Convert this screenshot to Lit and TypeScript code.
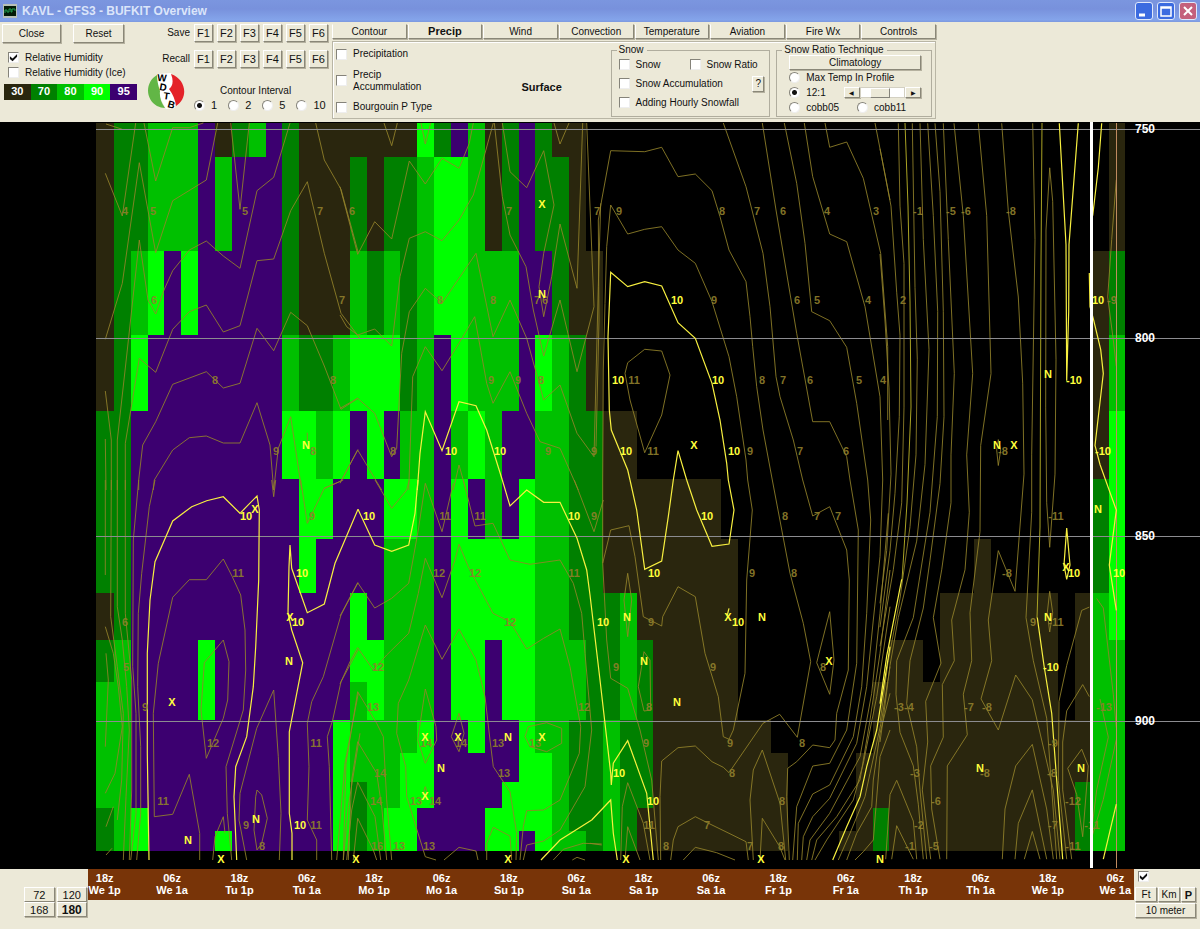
import { LitElement, html, svg, css } from "lit";
import { customElement, property, state } from "lit/decorators.js";
import { classMap } from "lit/directives/class-map.js";

const HUMIDITY: Record<string, string> = {
  K: "#2a260e",
  D: "#008000",
  M: "#00c000",
  L: "#00ff00",
  P: "#3c0070",
};

// Upper edge of each pressure layer; the final entry closes the last layer.
const LAYERS = [123, 157, 251, 335, 411, 479, 539, 593, 640, 682, 720, 753, 782, 808, 831, 851];

// One string per forecast step, one letter per pressure layer, top to bottom.
const STEPS = [
  "KKKKDDDKDMMMMDD", "DDDDDDDDMMMMMMM", "DDMLPPPPPPPPPLL", "MMLPPPPPPPPPPPP", "MMPPPPPPPPPPPPP",
  "MMLPPPPPPPPPPPP", "PPPPPPPPLLPPPPP", "KMPPPPPPPPPPPPL", "DPPPPPPPPPPPPPP", "MPPPPPPPPPPPPPP",
  "PPPPPPPPPPPPPPP", "DDDMLPPPPPPPPPP", "KKKDLLLPPPPPPPP", "KKKDMLPPPPPPPPP", "KKKMLPPPPPLLLLL",
  "KDMLPPPLLMMMDDD", "KKDLLPPPLLMMMMM", "KDMLPLMMMMMMMLL", "KDDDMLMMMMMLLLL", "LMMMMMMMMMLLLPP",
  "DLLPPPPPPPPPPPP", "PLLLMLLLLLPPPPP", "MMMMLPLLLLLPPPP", "KKMMMMLLPPPPPLL", "DDMMPPLLLLPPLLL",
  "PPPPPLLLLLLLLLP", "DDPLMMMMMMMLLLL", "KDDMMMMMMMMMMMM", "KKKDDDDDMMDDDDM", "..KKDDDDDDDDDDD",
  "....KKKDDDMMMMM", "....KKKMMMDDDDD", ".....KKKDDDDDKK", ".....KKKKKKKKKK", ".....KKKKKKKKKK",
  ".....KKKKKKKKKK", ".....KKKKKKKKKK", "......KKKKKKKKK", "..........KKKKK", "..........KKKKK",
  "...........KKKK", "...............", "...............", "...............", "..............K",
  "...........KKKK", ".........KKKKDD", "........KKKKKKK", "........KKKKKKK", ".........KKKKKK",
  ".......KKKKKKKK", ".......KKKKKKKK", "......KKKKKKKKK", ".......KKKKKKKK", ".......KKKKKKKK",
  ".......KKKKKKKK", ".......KKKKKKKK", "..........KKKKK", ".......KKKKKDDD", "..KKKDDMMMMMMMM",
  "KKDMLLLLMMMMMMM",
];

interface Sheet { x: number; y: number; sx: number; sy: number; minor: string[]; major: string[]; }

// Contour geometry, split in sheets with a local subpixel grid.
const SHEETS: Sheet[] = [
  { x: 90, y: 120, sx: 3, sy: 3,
    minor: [
      "46,160 97,288 137,9", "162,9 197,183 248,23 298,23 340,9",
      "46,658 97,490 148,128 197,398 248,242 349,180 383,9", "46,813 64,960 64,1110", "46,957 48,1110",
      "82,1110 82,960 112,690 148,360 174,540 197,582 222,510 248,452 298,390 349,363 400,408 450,445 501,212 551,172 600,9",
      "106,1110 106,970 148,715 197,757 248,628 298,575 349,555 400,636 450,617 501,422 551,417 602,272 652,185 703,400 753,580 810,655",
      "146,1110 146,1080 158,975 197,905 248,793 349,755 400,804 450,790 501,625 551,692 602,577 652,617 703,738 753,868 804,835",
      "190,1110 193,1080 248,990 298,953 349,948 400,969 450,969 501,848 540,975 551,1110 565,985 602,890 635,1110",
      "422,9 450,268 478,9", "677,9 703,120 753,208 804,395", "48,12 97,28", "703,1105 753,1083 804,988", "652,938 652,965",
    ],
    major: [] },
  { x: 340, y: 120, sx: 3, sy: 3,
    minor: [
      "0,200 53,403 104,305 155,357 208,123 256,192 306,115 357,145 388,70 400,9", "132,9 155,77 172,9", "243,9 256,72 272,9",
      "0,585 20,620 53,645 104,627 155,678 180,470 208,355 256,335 306,362 357,300 400,225 435,100 460,9",
      "0,865 53,835 104,880 155,1010 170,985 185,700 208,575 256,505 306,550 408,400 459,650 510,540 560,655 611,840 660,795 711,940 762,1010 775,500 782,250",
      "0,1090 53,990 125,1110",
      "206,1110 218,770 256,680 306,752 357,670 404,590 440,790 459,850 510,755 560,880 600,965 660,985 715,1110",
      "463,9 487,230 510,345 558,440 580,570 611,708 660,540 711,755 762,560 740,9",
      "487,9 510,155 560,203 611,92 642,255 611,400 597,500 611,590 635,470 660,312 711,505 728,9",
      "642,9 660,72 687,9", "340,1110 357,1035 378,1110",
    ],
    major: ["232,1110 240,1000 256,875 306,992 357,845 408,857 440,930 487,1080"] },
  { x: 90, y: 480, sx: 3, sy: 3,
    minor: [
      "46,0 46,285", "64,0 62,410 82,560 100,700 95,900 82,1020", "46,440 70,520 85,620 97,740 75,880 46,940",
      "48,520 55,600 46,800", "48,1040 70,980", "48,1125 66,1105", "82,0 82,380 97,480 110,620 118,750 108,950 100,1140",
      "106,0 106,400 125,600 125,930 118,1140", "146,0 130,180 128,560 138,700 138,1000 122,1140",
      "195,0 178,80 155,280 145,400 143,620 152,800 152,1000 140,1140",
      "329,1140 329,1060 298,883 248,1003 193,1010 190,700 205,550 248,352 298,299 349,299 400,237 427,290 452,345 465,450 467,570 460,690 408,860 412,1000 425,1140",
      "349,835 333,690 343,548 400,480 417,545 413,660 400,715 349,835",
      "470,1140 447,1020 450,940 500,745 551,630 565,830 573,1000 568,1140",
      "501,930 515,945 532,1015 515,1090 501,1110 492,1050 497,950 501,930", "368,1140 375,1070 400,1010 405,1060", "545,0 551,50 557,0",
      "680,1140 680,1080 652,1020 657,860 652,730 665,665 700,590 753,405 804,308", "725,1140 718,860 712,770 728,720 753,605 804,510",
      "632,0 652,130 703,25 760,0", "740,1140 765,850 805,640", "760,1140 775,980 810,760",
    ],
    major: [
      "177,1140 172,820 172,520 180,360 195,245 248,123 305,80 350,62 400,50 450,100 501,48 508,90 506,300 497,500 490,620 470,770 437,860 432,950 440,1140",
      "606,1140 606,1060 598,1000 598,755 638,548 605,450 594,400 597,260 600,195 605,265 652,398 703,372 735,250 804,88",
    ] },
  { x: 340, y: 480, sx: 3, sy: 3,
    minor: [
      "105,0 155,85 200,30 208,0", "0,408 53,308 104,384 155,355 206,310 235,150 256,10 306,155 340,10",
      "0,612 30,545 53,503 100,570 140,525 206,460 235,340 256,235 306,353 345,240 357,193 385,260 459,400 510,425 560,507 611,475 660,447 690,560 722,740 718,820 660,960 611,990 560,992 550,1040 540,1140",
      "370,0 405,138 459,130 510,240 570,253 660,240 700,310 725,400 735,520 755,750 735,920 660,1050 611,1083 560,1095 550,1140",
      "288,1140 256,1130 200,950 197,860 170,760 175,670 206,600 256,435 306,538 357,447 408,540 435,650 450,780 460,860 510,935 530,1060 528,1140",
      "10,1140 18,850 53,635 110,730 130,770 140,960 155,1140", "256,627 288,740 290,780 256,850 233,780 256,627",
      "357,700 372,760 357,815 334,770 357,700", "555,770 565,740 620,728 665,745 665,790 620,815 570,800 555,770",
      "25,1140 35,900 53,785 110,880 125,980 140,1140", "20,1140 35,990 53,907 105,1010 122,1140", "40,1140 53,1015 100,1110 110,1140",
      "440,1140 440,1090 460,1042 510,1068 515,1140", "312,1140 357,1102 408,1113 414,1140", "640,1140 670,1108 730,1090 785,1092",
      "697,1140 711,1132 735,1140", "703,0 762,155 790,60", "248,945 256,920 264,945",
    ],
    major: [
      "54,88 104,195 155,214 206,195 225,100 234,0",
      "487,0 510,78 560,30 611,67 660,67 711,175 740,270 750,345", "603,1140 660,1080 755,1020",
    ] },
  { x: 590, y: 120, sx: 3, sy: 3,
    minor: [
      "18,980 27,600 25,300 35,240 62,92 164,95 215,82 264,170 316,162 366,212 390,290 417,390 468,485 480,590 488,680 500,800 519,930 547,1080",
      "38,1080 40,750 45,550 50,380 62,255 113,342 164,328 215,320 264,390 316,430 366,545 417,710 440,830 468,1020 473,1080",
      "113,728 164,688 215,693 240,765 215,885 164,998 120,840 105,760 113,728",
      "400,9 468,200 519,400 540,560 558,770 570,830 610,960 638,1080", "517,9 558,270 620,640 668,905 719,905 770,1010 780,1080",
      "583,9 620,190 645,370 665,575 719,602 770,682 800,850 833,1080", "643,9 668,170 719,342 770,365 825,560 870,830 878,1080",
      "705,9 719,82 770,66 820,175 872,400 893,680 893,900", "855,9 900,240",
    ],
    major: [
      "120,1080 113,1050 64,930 58,870 54,650 62,457 113,500 164,485 215,498 264,608 316,655 366,790 390,900 410,1030 415,1080",
      "250,1080 264,992 290,1080",
    ] },
  { x: 590, y: 480, sx: 3, sy: 3,
    minor: [
      "205,1140 185,900 150,750 113,625 62,595 50,480 38,250 62,150 117,137 135,230 160,410 215,438 218,410 264,320 316,350 345,520 385,650 400,770 417,778 430,750 465,580 470,300 487,90 473,0",
      "38,0 38,250",
      "113,280 125,360 113,470 102,360 113,280", "162,515 180,540 182,690 162,693 145,620 162,515",
      "547,0 600,280 640,430 662,545 622,772 569,703 519,730 417,878 400,862 366,845 316,798 264,803 215,843 210,950 212,1140",
      "638,0 668,108 719,80 770,210 778,300 775,570 740,700 735,780 719,803 668,795 620,845 593,865 590,950 598,1140",
      "719,395 732,540 719,643 680,548 719,395", "242,1140 250,1080 264,1040 316,1010 366,1035 417,1060 468,1085 475,1140",
      "280,1140 316,1102 380,1118 435,1140", "490,1140 480,960 490,870 517,810 570,970 587,1140", "510,1140 517,1015 569,1100 585,1140",
      "780,0 805,150 800,550 770,750 719,850 668,858 620,980 608,1140", "833,0 842,120 830,400 815,620 790,770 719,915 668,942 625,1030 622,1140",
      "878,0 870,230 850,420 830,620 800,790 719,955 668,1010 640,1070 635,1140", "895,100 870,400 845,640 810,830 719,1000 660,1080 650,1140",
      "900,270 870,520 840,720 810,900 740,1010 680,1080 665,1140", "900,380 860,650 820,850 790,960 710,1080 675,1140",
      "900,560 875,720 840,880 825,950 780,1060 745,1140", "900,640 870,760 850,900 845,980 800,1060 770,1140",
      "900,750 870,830 850,1080 820,1115 795,1140", "92,1140 97,980 113,908 160,1030 180,1140", "105,1140 113,1040 150,1140", "0,1090 35,1095",
    ],
    major: [
      "0,345 30,600 62,880 64,915 70,850 113,782 170,940 190,1140", "5,1020 62,960 70,1060 82,1140",
      "120,0 140,90 164,268 215,243 235,110 250,0", "290,0 320,90 366,199 417,192 432,90 415,0", "417,385 412,405",
      "900,500 860,750 830,860 810,950 770,1040 728,1140",
    ] },
  { x: 880, y: 120, sx: 3, sy: 2.09,
    minor: [
      "0,280 15,420 27,560 33,740 20,900 0,1010", "0,60 33,180 50,360 60,450 58,620 45,780 30,900 0,1060",
      "55,7 60,180 72,300 72,600 65,800 40,940 0,1100", "97,7 105,350 112,500 108,700 90,850 60,1000 25,1130 0,1260",
      "120,7 130,250 147,480 135,720 110,880 55,1040 30,1140 10,1250 0,1300",
      "143,7 160,200 173,400 172,620 150,820 100,1040 50,1130 48,1200 60,1280 100,1350 115,1430 130,1545",
      "165,7 180,150 190,400 192,620 180,760 150,920 130,1020 90,1130 80,1220 110,1310 120,1400 140,1545",
      "190,7 205,250 223,530 213,700 213,800 185,940 160,1040 183,1135 137,1215 143,1300 127,1400 152,1545",
      "222,7 250,200 278,530 260,700 268,820 255,940 215,1045 223,1130 187,1180 190,1290 152,1350 155,1440 180,1545",
      "295,7 320,200 333,530 302,680 300,860 270,1030 275,1130 250,1200 262,1285 202,1350 200,1545",
      "365,7 385,190 415,370 428,550 432,740 405,985 355,900 325,1045 335,1130 303,1210 355,1275 407,1160 457,1212 520,1400 540,1545",
      "458,7 465,250 455,700 455,820 438,1040 460,1130 500,1250 530,1545",
      "497,600 498,230 509,100 518,170 528,500 525,740 509,893 500,800 497,600",
      "355,668 362,690 355,722 350,690 355,668", "509,985 518,1030 509,1070 502,1030 509,985",
      "709,125 695,250 683,370 700,460 709,515", "628,1018 605,1025 560,1140 537,1215 535,1380 560,1545",
      "628,1205 608,1180 560,1235 548,1300 548,1400 575,1545", "605,1315 625,1350 608,1498 590,1410 563,1355 605,1315",
      "367,1545 375,1440 407,1350 457,1305 500,1440 520,1545", "405,1545 415,1470 457,1400 500,1545", "433,1545 457,1487 480,1545",
      "17,1545 30,1410 50,1380 100,1465 110,1545", "35,1545 50,1475 100,1545", "650,1000 670,1020 700,1200 709,1270",
      "660,1210 685,1290 650,1400 632,1500", "709,1295 670,1420 635,1500",
    ],
    major: [
      "538,7 558,260 560,545 566,400 567,260 595,7", "560,853 570,930 560,960 552,930 560,853", "665,7 655,100 638,200",
      "628,320 630,390 640,415 662,480 670,530 645,680 660,720 709,815 688,930 709,1025", "709,1430 670,1545",
      "65,960 20,1120 0,1220", "472,1040 492,1140 515,1240 530,1380 548,1545",
    ] },
];

const BRIGHT_MINOR = ["905,123 908,206 910,302 911,407 907,503 902,580", "1042,123 1041,264 1040,527 1037,618"];

// Rows of "value@x"; a trailing "!" marks the emphasised ten-degree contours.
const LABELS: [number, string][] = [
  [211, "4@125 5@153 5@245 7@320 6@352 7@509 7@597 9@619 8@722 7@757 6@783 4@827 3@876 -1@918 -5@951 -6@966 -8@1011"],
  [300, "6@154 7@342 8@440 8@493 7@537 6@545 10@677! 9@714 6@797 5@817 4@868 2@903 10@1098! -9@1112"],
  [380, "8@215 8@333 9@491 9@518 8@541 10@618! 11@634 10@718! 8@762 7@783 6@810 5@859 4@883 -10@1074!"],
  [451, "9@276 8@313 8@393 10@451! 10@500! 9@548 9@594 10@626! 11@653 10@734! 9@750 7@800 6@846 -8@1003 -10@1103!"],
  [516, "10@246! 9@312 10@369! 11@445 11@480 10@574! 9@594 10@707! 8@785 7@817 7@838 -11@1056"],
  [573, "11@238 10@302! 12@439 12@475 11@574 10@654! 9@752 8@794 -8@1007 10@1074! 10@1119!"],
  [622, "6@125 10@298! 12@510 10@603! 9@651 10@738! 9@1033 -11@1056"],
  [667, "5@126 12@378 9@616 9@713 8@823 -10@1051!"],
  [707, "9@145 13@373 12@584 8@649 -3@899 -4@909 -7@969 -8@987 -13@1104"],
  [743, "12@213 11@316 14@426 14@461 13@498 13@535 9@646 9@730 8@802 -9@1053"],
  [773, "14@380 13@504 10@619! 8@732 -3@915 -8@985 -8@1052"],
  [801, "11@163 14@376 13@416 14@435 10@653! 8@782 -6@936 -12@1073"],
  [825, "9@246 10@300! 11@316 11@649 7@707 -2@919 -7@1053 -11@1092"],
  [846, "8@262 16@377 13@399 13@429 8@666 7@750 8@781 -1@910 -5@934 -11@1073"],
];

const EXTREMES: [string, string][] = [
  ["X", "542,204 255,509 694,445 1014,445 1066,567 290,617 172,702 728,617 829,661 425,737 458,737 542,737 425,796 221,859 356,859 508,859 626,859 761,859"],
  ["N", "542,294 306,445 997,445 1048,374 1098,509 1048,617 289,661 627,617 644,661 762,617 677,702 508,737 441,768 188,840 256,819 880,859 980,768 1081,768"],
];

const GRID: [number, number][] = [[750, 129], [800, 338], [850, 536], [900, 721]];
const STEP_WIDTH = 16.86;
const CHART_LEFT = 97;
const edge = (i: number) => (i === 0 ? 96 : Math.round(CHART_LEFT + i * STEP_WIDTH));
const project = (s: Sheet, line: string) =>
  line.split(" ").map((p) => {
    const [x, y] = p.split(",").map(Number);
    return `${(s.x + x / s.sx).toFixed(1)},${(s.y + y / s.sy).toFixed(1)}`;
  }).join(" ");

@customElement("bufkit-chart")
export class BufkitChart extends LitElement {
  static styles = css`
    :host { display: block; background: #000; }
    svg { display: block; width: 100%; height: auto; font-family: "Liberation Sans", Arial, sans-serif; font-size: 11px; }
    .minor { fill: none; stroke: #94842a; stroke-width: 1; opacity: 0.85; }
    .bright { fill: none; stroke: #aaa324; stroke-width: 1; }
    .major { fill: none; stroke: #f8f040; stroke-width: 1.2; }
    .grid { stroke: #8c8c90; stroke-width: 1; }
    .label { fill: #8f7f2c; text-anchor: middle; font-weight: bold; opacity: 0.9; }
    .ten, .mark { fill: #ffff3c; text-anchor: middle; font-weight: bold; }
    .axis { fill: #fff; font-size: 12px; font-weight: bold; }
    .now { fill: #fff; }
    .last { stroke: #c08a60; stroke-width: 1; }
  `;

  render() {
    return html`<svg viewBox="0 122 1200 747" role="img" aria-label="Relative humidity and temperature overview">
      <g shape-rendering="crispEdges">
        ${STEPS.map((column, i) => column.split("").map((c, j) => c === "." ? "" : svg`
          <rect x=${edge(i)} y=${LAYERS[j]} width=${edge(i + 1) - edge(i)} height=${LAYERS[j + 1] - LAYERS[j]} fill=${HUMIDITY[c]}></rect>`))}
      </g>
      ${SHEETS.map((s) => s.minor.map((l) => svg`<polyline class="minor" points=${project(s, l)}></polyline>`))}
      ${BRIGHT_MINOR.map((l) => svg`<polyline class="bright" points=${l}></polyline>`)}
      <g shape-rendering="crispEdges">
        ${GRID.map(([, y]) => svg`<line class="grid" x1="96" x2="1200" y1=${y} y2=${y}></line>`)}
        <line class="last" x1="1116" x2="1116" y1="123" y2="868"></line>
      </g>
      ${SHEETS.map((s) => s.major.map((l) => svg`<polyline class="major" points=${project(s, l)}></polyline>`))}
      ${LABELS.map(([y, row]) => row.split(" ").map((item) => {
        const [value, at] = item.split("@");
        return svg`<text class=${at.endsWith("!") ? "ten" : "label"} x=${parseInt(at, 10)} y=${y + 4}>${value}</text>`;
      }))}
      ${EXTREMES.map(([glyph, spots]) => spots.split(" ").map((p) => {
        const [x, y] = p.split(",").map(Number);
        return svg`<text class="mark" x=${x} y=${y + 4}>${glyph}</text>`;
      }))}
      <rect class="now" x="1090" y="122" width="3" height="746"></rect>
      ${GRID.map(([value, y]) => svg`<text class="axis" x="1135" y=${y + 4}>${value}</text>`)}
    </svg>`;
  }
}

@customElement("app-root")
export class AppRoot extends LitElement {
  static styles = css`
    :host { display: block; background: #ece9d8; color: #111; font: 10px/12px "Liberation Sans", Arial, sans-serif; }
    * { box-sizing: border-box; }
    button { font: inherit; color: inherit; background: #ece9d8; padding: 0; margin: 0; border: 1px solid; border-color: #fff #8a8778 #8a8778 #fff; box-shadow: 1px 1px 0 #b5b19f; white-space: nowrap; }
    .title { display: flex; align-items: center; height: 22px; gap: 5px; padding: 0 3px; background: linear-gradient(#7b96df, #7891dc 40%, #84a4ea 90%, #7c98de); color: #dbe5fa; }
    h1 { flex: 1; margin: 0; font-size: 12px; line-height: 22px; }
    .app-icon { width: 14px; height: 14px; }
    .window-buttons { display: flex; gap: 4px; }
    .window-buttons button { width: 18px; height: 18px; border: 1px solid #dfe8fb; border-radius: 3px; background: #3b6be0; box-shadow: none; }
    .window-buttons .quit { background: #c4607c; }
    .window-buttons svg { display: block; width: 16px; height: 16px; }
    .toolbar { display: flex; height: 100px; padding-top: 2px; }
    .primary { width: 143px; padding-left: 2px; }
    .actions { display: flex; gap: 12px; margin-bottom: 7px; }
    .actions button { width: 51px; height: 19px; }
    .actions button:first-child { width: 59px; }
    label { display: flex; align-items: center; gap: 6px; white-space: nowrap; }
    .primary label { height: 15px; padding-left: 6px; }
    input { appearance: none; margin: 0; flex: none; }
    input[type="checkbox"] { width: 11px; height: 11px; background: #fff; border: 1px solid; border-color: #85837a #eee #eee #85837a; }
    input[type="checkbox"]:checked::before { content: ""; display: block; width: 9px; height: 9px; background: #111; clip-path: polygon(10% 35%, 40% 60%, 90% 10%, 90% 42%, 40% 92%, 10% 67%); }
    input[type="radio"] { width: 11px; height: 11px; border-radius: 50%; background: #fff; border: 1px solid; border-color: #85837a #eee #eee #85837a; }
    input[type="radio"]:checked { background: radial-gradient(#111 0 2px, #fff 3px); }
    .legend { display: flex; width: 133px; height: 16px; margin: 4px 0 0 2px; color: #fff; font: bold 11px/14px "Liberation Sans", Arial, sans-serif; text-align: center; }
    .legend span { flex: 1; }
    .h30 { background: #2a260e; } .h70 { background: #008000; } .h80 { background: #00c000; } .h90 { background: #00ff00; } .h95 { background: #3c0070; }
    .logo { width: 46px; padding: 48px 0 0 4px; }
    .logo svg { width: 38px; height: 38px; display: block; }
    .logo text { font: bold 10px "Liberation Sans", Arial, sans-serif; }
    .memory { width: 143px; margin-left: -25px; }
    .slots { display: flex; gap: 4px; height: 18px; margin-bottom: 8px; align-items: center; justify-content: flex-end; width: 164px; }
    .slots button { width: 19px; height: 18px; flex: none; font-size: 11px; }
    .interval { border: 0; margin: 0; padding: 9px 0 0 30px; width: 164px; }
    .interval legend { float: left; width: 100%; padding: 0 0 2px 26px; }
    .choices { clear: both; display: flex; gap: 11px; font-size: 11px; }
    .interval label { gap: 6px; }
    .options { margin-left: 25px; width: 604px; }
    .tabs { display: flex; height: 15px; gap: 1px; }
    .tabs button { flex: 1; height: 15px; line-height: 11px; border-top-color: #ece9d8; }
    .tabs .active { font-weight: bold; font-size: 11px; }
    .sheet { display: flex; height: 78px; margin-top: 2px; border: 1px solid #b9b6a5; box-shadow: inset 1px 1px 0 #fff; padding: 3px 3px 1px; }
    .precip { width: 150px; display: flex; flex-direction: column; justify-content: space-between; padding: 3px 0 4px; }
    .surface { width: 112px; align-self: center; text-align: center; font-size: 11px; padding-top: 12px; }
    fieldset { border: 1px solid #b0ad9e; margin: 0; padding: 0 5px; min-width: 0; }
    .sheet legend { padding: 0 3px 0 2px; line-height: 10px; }
    .snow { width: 160px; margin-left: 13px; }
    .snow .row { display: flex; height: 19px; align-items: center; justify-content: space-between; padding-left: 2px; }
    .snow .row:first-of-type { justify-content: flex-start; gap: 29px; }
    .help { width: 12px; height: 16px; }
    .ratio { width: 156px; margin-left: 6px; padding: 0 10px 0 12px; }
    .ratio legend { margin-left: -7px; }
    .ratio .clim { display: block; width: 100%; height: 15px; }
    .ratio .row { display: flex; height: 15px; align-items: center; gap: 18px; }
    .scroll { display: flex; flex: 1; height: 11px; }
    .scroll button { width: 16px; font-size: 6px; line-height: 8px; }
    .scroll input { flex: 1; width: 20px; height: 11px; background: #fff; border: 1px solid #d3d0c2; }
    .scroll input::-webkit-slider-thumb { appearance: none; width: 20px; height: 10px; background: #ece9d8; border: 1px solid; border-color: #fff #85837a #85837a #fff; }
    .footer { display: flex; height: 60px; align-items: flex-start; }
    .hours { width: 88px; padding: 18px 1px 0 24px; display: grid; grid-template-columns: 1fr 1fr; gap: 0 2px; }
    .hours button { height: 15px; font-size: 11px; line-height: 12px; }
    .hours .active { font-weight: bold; font-size: 12px; }
    .timeline { flex: 1; min-width: 0; height: 31px; background: #783408; overflow: hidden; }
    .times { display: flex; margin: 3px -15px 0 -17px; color: #fff; font: bold 11px/12px "Liberation Sans", Arial, sans-serif; text-align: center; }
    .times span { flex: 1; }
    .units { width: 66px; padding: 2px 4px 0 1px; }
    .units input { margin: 0 0 5px 3px; display: block; }
    .unit-row { display: grid; grid-template-columns: 1fr 1fr 15px; gap: 1px; margin-bottom: 1px; }
    .units button { height: 15px; width: 100%; }
    .units .active { font-weight: bold; font-size: 11px; }
  `;

  @property() heading = "KAVL - GFS3 - BUFKIT Overview";
  @state() private tab = "Precip";
  @state() private span = "180";

  private keys() {
    return ["F1", "F2", "F3", "F4", "F5", "F6"].map((k) => html`<button>${k}</button>`);
  }

  render() {
    const tabs = ["Contour", "Precip", "Wind", "Convection", "Temperature", "Aviation", "Fire Wx", "Controls"];
    const days = ["We 1p", "We 1a", "Tu 1p", "Tu 1a", "Mo 1p", "Mo 1a", "Su 1p", "Su 1a", "Sa 1p", "Sa 1a", "Fr 1p", "Fr 1a", "Th 1p", "Th 1a", "We 1p", "We 1a"];
    return html`
      <header class="title">
        <svg class="app-icon" viewBox="0 0 14 14"><rect width="14" height="14" fill="#b8c0b8"/><rect x="1" y="2" width="12" height="10" fill="#031a08"/><path d="M2 9V6h2v2h2V5h2v3h1V5h3v2" fill="none" stroke="#20a050"/></svg>
        <h1>${this.heading}</h1>
        <div class="window-buttons">
          <button aria-label="Minimize"><svg viewBox="0 0 16 16"><path d="M3 12h6" stroke="#fff" stroke-width="3"/></svg></button>
          <button aria-label="Maximize"><svg viewBox="0 0 16 16"><path d="M3 4h10v9H3zM3 5h10" stroke="#fff" fill="none" stroke-width="1.5"/></svg></button>
          <button class="quit" aria-label="Close window"><svg viewBox="0 0 16 16"><path d="M4 4l8 8M12 4l-8 8" stroke="#fff" stroke-width="2"/></svg></button>
        </div>
      </header>
      <section class="toolbar">
        <div class="primary">
          <div class="actions"><button>Close</button><button>Reset</button></div>
          <label><input type="checkbox" checked />Relative Humidity</label>
          <label><input type="checkbox" />Relative Humidity (Ice)</label>
          <div class="legend"><span class="h30">30</span><span class="h70">70</span><span class="h80">80</span><span class="h90">90</span><span class="h95">95</span></div>
        </div>
        <div class="logo">
          <svg viewBox="0 0 38 38" role="img" aria-label="WDTB">
            <path d="M10 2L24 1Q30 12 22 17Q30 26 28 36L19 37Q8 20 10 2Z" fill="#fff"/>
            <path d="M10 3C-2 10-2 27 10 34Q14 36 18 36Q12 28 13 19Q10 10 10 3Z" fill="#62b646"/>
            <path d="M24 2C39 7 42 26 29 34Q28 25 22 17Q28 12 24 2Z" fill="#e42229"/>
            <text x="10" y="9" transform="rotate(4 10 9)">W</text><text x="12" y="18" transform="rotate(10 12 18)">D</text><text x="16" y="27" transform="rotate(8 16 27)">T</text><text x="20" y="35" transform="rotate(15 20 35)">B</text>
          </svg>
        </div>
        <div class="memory">
          <div class="slots"><span>Save</span>${this.keys()}</div>
          <div class="slots"><span>Recall</span>${this.keys()}</div>
          <fieldset class="interval">
            <legend>Contour Interval</legend>
            <div class="choices">${["1", "2", "5", "10"].map((v) => html`<label><input type="radio" name="interval" ?checked=${v === "1"} />${v}</label>`)}</div>
          </fieldset>
        </div>
        <div class="options">
          <nav class="tabs">${tabs.map((t) => html`<button class=${classMap({ active: t === this.tab })} @click=${() => (this.tab = t)}>${t}</button>`)}</nav>
          <div class="sheet">
            <div class="precip">
              <label><input type="checkbox" />Precipitation</label>
              <label><input type="checkbox" /><span>Precip<br />Accummulation</span></label>
              <label><input type="checkbox" />Bourgouin P Type</label>
            </div>
            <strong class="surface">Surface</strong>
            <fieldset class="snow">
              <legend>Snow</legend>
              <div class="row"><label><input type="checkbox" />Snow</label><label><input type="checkbox" />Snow Ratio</label></div>
              <div class="row"><label><input type="checkbox" />Snow Accumulation</label><button class="help">?</button></div>
              <div class="row"><label><input type="checkbox" />Adding Hourly Snowfall</label></div>
            </fieldset>
            <fieldset class="ratio">
              <legend>Snow Ratio Technique</legend>
              <button class="clim">Climatology</button>
              <div class="row"><label><input type="radio" name="ratio" />Max Temp In Profile</label></div>
              <div class="row"><label><input type="radio" name="ratio" checked />12:1</label>
                <div class="scroll"><button aria-label="Lower ratio">◀</button><input type="range" aria-label="Snow ratio" min="0" max="100" value="40" /><button aria-label="Raise ratio">▶</button></div></div>
              <div class="row"><label><input type="radio" name="ratio" />cobb05</label><label><input type="radio" name="ratio" />cobb11</label></div>
            </fieldset>
          </div>
        </div>
      </section>
      <bufkit-chart></bufkit-chart>
      <footer class="footer">
        <div class="hours">${["72", "120", "168", "180"].map((h) => html`<button class=${classMap({ active: h === this.span })} @click=${() => (this.span = h)}>${h}</button>`)}</div>
        <div class="timeline"><div class="times">${days.map((d, i) => html`<span>${i % 2 ? "06z" : "18z"}<br />${d}</span>`)}</div></div>
        <div class="units">
          <input type="checkbox" aria-label="Show height scale" checked />
          <div class="unit-row"><button>Ft</button><button>Km</button><button class="active">P</button></div>
          <button>10 meter</button>
        </div>
      </footer>`;
  }
}
